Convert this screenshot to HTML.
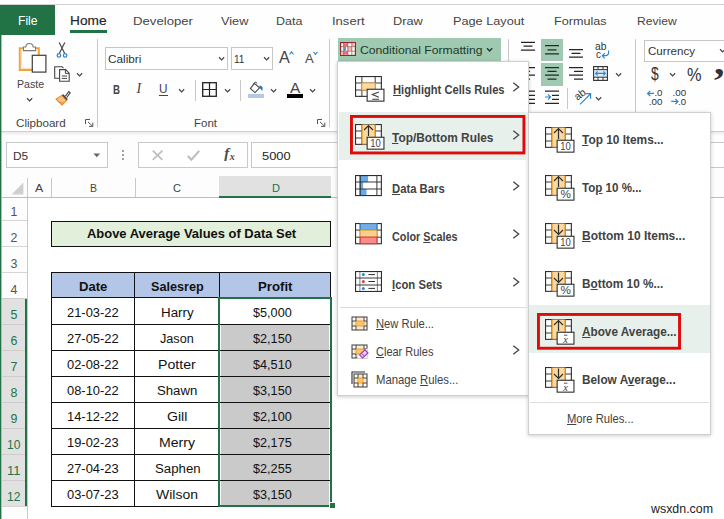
<!DOCTYPE html>
<html lang="en"><head><meta charset="utf-8"><title>Excel - Conditional Formatting - Above Average</title>
<style>
html,body{margin:0;padding:0;}
body{width:724px;height:519px;overflow:hidden;background:#fff;position:relative;font-family:"Liberation Sans",sans-serif;}
#r{position:absolute;left:0;top:0;width:724px;height:519px;overflow:hidden;}
#r div,#r svg,#r span.t{position:absolute;}
#r span.t{white-space:nowrap;transform-origin:0 50%;}
#r svg{overflow:visible;}
u{text-decoration:underline;text-decoration-thickness:1px;text-underline-offset:1px;}
</style></head>
<body><div id="r">
<div style="left:0px;top:0px;width:724px;height:5px;background:#fff;border-bottom:1px solid #d2d2d2;box-sizing:border-box"></div>
<div style="left:0px;top:5px;width:724px;height:126px;background:#fefefe"></div>
<div style="left:0px;top:130.6px;width:724px;height:1.2px;background:#cfcfcf"></div>
<div style="left:0px;top:131.8px;width:724px;height:4.6px;background:linear-gradient(#ebebeb,#fdfdfd)"></div>
<div style="left:0px;top:136.4px;width:724px;height:40px;background:#fdfdfd"></div>
<div style="left:0px;top:176px;width:724px;height:21px;background:#fdfdfd"></div>
<div style="left:0px;top:5px;width:54.5px;height:29.5px;background:#217346"></div>
<span class="t" style="left:18.00px;top:15px;font-size:12px;line-height:12px;color:#fff;transform:scaleX(1.0084);">File</span>
<span class="t" style="left:69.50px;top:15px;font-size:12px;line-height:12px;color:#262626;transform:scaleX(1.1402);-webkit-text-stroke:0.15px #262626;">Home</span>
<div style="left:69.5px;top:30px;width:37.5px;height:2.5px;background:#217346"></div>
<span class="t" style="left:133.00px;top:16px;font-size:11.8px;line-height:11.8px;color:#444;transform:scaleX(1.1155);">Developer</span>
<span class="t" style="left:221.00px;top:16px;font-size:11.8px;line-height:11.8px;color:#444;transform:scaleX(1.0803);">View</span>
<span class="t" style="left:276.40px;top:16px;font-size:11.8px;line-height:11.8px;color:#444;transform:scaleX(1.0591);">Data</span>
<span class="t" style="left:331.80px;top:16px;font-size:11.8px;line-height:11.8px;color:#444;transform:scaleX(1.1046);">Insert</span>
<span class="t" style="left:393.20px;top:16px;font-size:11.8px;line-height:11.8px;color:#444;transform:scaleX(1.0822);">Draw</span>
<span class="t" style="left:453.00px;top:16px;font-size:11.8px;line-height:11.8px;color:#444;transform:scaleX(1.0759);">Page Layout</span>
<span class="t" style="left:554.20px;top:16px;font-size:11.8px;line-height:11.8px;color:#444;transform:scaleX(1.0675);">Formulas</span>
<span class="t" style="left:637.30px;top:16px;font-size:11.8px;line-height:11.8px;color:#444;transform:scaleX(1.0261);">Review</span>
<svg style="left:17px;top:42px;" width="31" height="32" viewBox="0 0 31 32">
<path d="M7 6.2 H2.8 V28 H15" fill="none" stroke="#eea43c" stroke-width="2"/>
<path d="M18 6.2 H21.8 V13" fill="none" stroke="#eea43c" stroke-width="2"/>
<path d="M4.4 7.8 V26.4 H15" fill="none" stroke="#fbe3bd" stroke-width="1.2"/>
<path d="M6.4 8.6 V5 H8.8 C9.2 0.4 15.8 0.4 16.2 5 H18.6 V8.6 Z" fill="#fff" stroke="#7a7a7a" stroke-width="1.1"/>
<rect x="15.3" y="13.3" width="13.6" height="16.8" fill="#fff" stroke="#444" stroke-width="1.25"/>
</svg>
<span class="t" style="left:16.80px;top:79px;font-size:11.4px;line-height:11.4px;color:#444;transform:scaleX(0.9296);">Paste</span>
<svg style="left:25.599999999999998px;top:96.60000000000001px;" width="7.2" height="5.2" viewBox="0 0 7.2 5.2"><path d="M1 1.30 L3.6 3.90 L6.2 1.30" fill="none" stroke="#444" stroke-width="1.2"/></svg>
<svg style="left:56px;top:42px;" width="12" height="16" viewBox="0 0 12 16">
<path d="M3.2 0.4 L8.6 11.2 M8.8 0.4 L3.4 11.2" fill="none" stroke="#444" stroke-width="1.15"/>
<circle cx="2.9" cy="13.4" r="1.75" fill="none" stroke="#2e86d2" stroke-width="1.25"/>
<circle cx="9.1" cy="13.4" r="1.75" fill="none" stroke="#2e86d2" stroke-width="1.25"/>
</svg>
<svg style="left:54px;top:66px;" width="16" height="16" viewBox="0 0 16 16">
<path d="M5.2 12.2 H0.7 V0.7 H8 L9.5 2.2" fill="none" stroke="#444" stroke-width="1.1"/>
<path d="M5.6 3.6 H11.6 L15.2 7.2 V15.3 H5.6 Z" fill="#fff" stroke="#444" stroke-width="1.1"/>
<path d="M11.4 3.8 V7.4 H15" fill="none" stroke="#444" stroke-width="1"/>
<path d="M7.8 10 H13 M7.8 12.4 H13" stroke="#444" stroke-width="1"/>
</svg>
<svg style="left:76.0px;top:71.9px;" width="7.2" height="5.2" viewBox="0 0 7.2 5.2"><path d="M1 1.30 L3.6 3.90 L6.2 1.30" fill="none" stroke="#444" stroke-width="1.2"/></svg>
<svg style="left:54.5px;top:89.5px;" width="16" height="16" viewBox="0 0 16 16">
<path d="M1 9.2 L6.8 5.4 L11.6 10.6 L7 15 Z" fill="#f6c48a" stroke="#e38b2c" stroke-width="1.1"/>
<path d="M3.4 11.8 L8.8 13.2" stroke="#e38b2c" stroke-width="1"/>
<path d="M7.6 4.6 L12.2 9.8" stroke="#444" stroke-width="1.6"/>
<path d="M10.2 6.4 L13.8 1.6 L15.2 2.8 L11.6 7.8" fill="#fff" stroke="#444" stroke-width="1.1"/>
</svg>
<span class="t" style="left:15.80px;top:118px;font-size:11.2px;line-height:11.2px;color:#444;transform:scaleX(1.0367);">Clipboard</span>
<svg style="left:84.6px;top:119px;" width="9" height="8" viewBox="0 0 9 8"><path d="M0.5 5 V0.5 H5" fill="none" stroke="#555" stroke-width="1"/><path d="M3 3 L7.6 7.2 M7.8 3.6 V7.4 H4" fill="none" stroke="#555" stroke-width="1"/></svg>
<div style="left:97px;top:39px;width:1px;height:88px;background:#c8c8c8"></div>
<div style="left:105px;top:47px;width:122.5px;height:22.5px;background:#fff;border:1px solid #c6c6c6;box-sizing:border-box"></div>
<div style="left:230.5px;top:47px;width:42px;height:22.5px;background:#fff;border:1px solid #c6c6c6;box-sizing:border-box"></div>
<span class="t" style="left:108.20px;top:54px;font-size:11px;line-height:11px;color:#333;transform:scaleX(1.0714);">Calibri</span>
<svg style="left:217.8px;top:56.4px;" width="7.2" height="5.2" viewBox="0 0 7.2 5.2"><path d="M1 1.30 L3.6 3.90 L6.2 1.30" fill="none" stroke="#444" stroke-width="1.2"/></svg>
<span class="t" style="left:233.70px;top:54px;font-size:11px;line-height:11px;color:#333;transform:scaleX(0.9195);">11</span>
<svg style="left:262.79999999999995px;top:56.4px;" width="7.2" height="5.2" viewBox="0 0 7.2 5.2"><path d="M1 1.30 L3.6 3.90 L6.2 1.30" fill="none" stroke="#444" stroke-width="1.2"/></svg>
<span class="t" style="left:279.00px;top:49px;font-size:16.4px;line-height:16.4px;color:#444;transform:scaleX(0.9873);">A</span>
<svg style="left:289.2px;top:51px;" width="5" height="4" viewBox="0 0 5 4"><path d="M0.5 3.4 L2.5 0.9 L4.5 3.4" fill="none" stroke="#2e86d2" stroke-width="1.1"/></svg>
<span class="t" style="left:304.60px;top:53px;font-size:12.4px;line-height:12.4px;color:#444;transform:scaleX(1.0518);">A</span>
<svg style="left:313.2px;top:51px;" width="5" height="4" viewBox="0 0 5 4"><path d="M0.5 0.8 L2.5 3.3 L4.5 0.8" fill="none" stroke="#2e86d2" stroke-width="1.1"/></svg>
<span class="t" style="left:112.90px;top:83px;font-size:13px;line-height:13px;color:#444;font-weight:bold;transform:scaleX(0.7456);">B</span>
<span class="t" style="left:136.6px;top:81.6px;font-size:14px;line-height:14px;color:#444;font-family:'Liberation Serif',serif;font-style:italic;">I</span>
<span class="t" style="left:159.20px;top:83px;font-size:12.6px;line-height:12.6px;color:#444;transform:scaleX(0.9341);">U</span>
<div style="left:159.2px;top:95px;width:8.6px;height:1px;background:#444"></div>
<svg style="left:177.70000000000002px;top:87.60000000000001px;" width="7.2" height="5.2" viewBox="0 0 7.2 5.2"><path d="M1 1.30 L3.6 3.90 L6.2 1.30" fill="none" stroke="#444" stroke-width="1.2"/></svg>
<div style="left:194.5px;top:80px;width:1px;height:21px;background:#c8c8c8"></div>
<svg style="left:202px;top:82px;" width="15" height="15" viewBox="0 0 15 15"><rect x="0.7" y="0.7" width="13.6" height="13.6" fill="none" stroke="#222" stroke-width="1.3"/><path d="M7.5 0.7 V14.3 M0.7 7.5 H14.3" stroke="#222" stroke-width="1.2"/></svg>
<svg style="left:223.9px;top:87.7px;" width="7.2" height="5.2" viewBox="0 0 7.2 5.2"><path d="M1 1.30 L3.6 3.90 L6.2 1.30" fill="none" stroke="#444" stroke-width="1.2"/></svg>
<div style="left:240.3px;top:80px;width:1px;height:21px;background:#c8c8c8"></div>
<svg style="left:248px;top:81px;" width="16" height="13" viewBox="0 0 16 13">
<path d="M6.4 2.4 L11.6 6.8 L7 11.6 L2.4 7.4 Z" fill="#fff" stroke="#444" stroke-width="1.1"/>
<path d="M5.2 3.6 L7.4 0.9 L9.2 2.4" fill="none" stroke="#444" stroke-width="1"/>
<path d="M11.6 5.4 C13.6 4.2 14.6 6 14.2 9.4 C13.2 8.6 12.4 7.6 11.8 6.8 Z" fill="#2e74b5" stroke="#2e74b5" stroke-width="0.6"/>
</svg>
<div style="left:248px;top:94.2px;width:15.8px;height:3.6px;background:#b4c7e7"></div>
<svg style="left:270.0px;top:87.7px;" width="7.2" height="5.2" viewBox="0 0 7.2 5.2"><path d="M1 1.30 L3.6 3.90 L6.2 1.30" fill="none" stroke="#444" stroke-width="1.2"/></svg>
<span class="t" style="left:290.10px;top:81px;font-size:14.2px;line-height:14.2px;color:#444;transform:scaleX(1.0874);">A</span>
<div style="left:286.9px;top:94.2px;width:16.3px;height:3.6px;background:#000"></div>
<svg style="left:308.9px;top:87.7px;" width="7.2" height="5.2" viewBox="0 0 7.2 5.2"><path d="M1 1.30 L3.6 3.90 L6.2 1.30" fill="none" stroke="#444" stroke-width="1.2"/></svg>
<span class="t" style="left:194.00px;top:118px;font-size:11.2px;line-height:11.2px;color:#444;transform:scaleX(1.0263);">Font</span>
<svg style="left:317px;top:119px;" width="9" height="8" viewBox="0 0 9 8"><path d="M0.5 5 V0.5 H5" fill="none" stroke="#555" stroke-width="1"/><path d="M3 3 L7.6 7.2 M7.8 3.6 V7.4 H4" fill="none" stroke="#555" stroke-width="1"/></svg>
<div style="left:328.7px;top:39px;width:1px;height:88px;background:#c8c8c8"></div>
<div style="left:337.5px;top:38px;width:163.4px;height:23.4px;background:#9fc9b1"></div>
<svg style="left:340.2px;top:42px;" width="16" height="14" viewBox="0 0 16 14">
<rect x="0.6" y="0.6" width="14.8" height="12.8" fill="#fff" stroke="#8a2b2b" stroke-width="1.2"/>
<rect x="3.6" y="1.2" width="4.2" height="3" fill="#f26d6d"/><rect x="3.6" y="9.6" width="4.2" height="3" fill="#f26d6d"/>
<rect x="7.8" y="5" width="4" height="3.8" fill="#f9b3b3"/><rect x="3.9" y="5" width="2" height="3.8" fill="#4f9ad9"/>
<rect x="11.8" y="1.2" width="3" height="3" fill="#f9b3b3"/><rect x="0.9" y="9.6" width="2.6" height="3" fill="#f9b3b3"/>
<path d="M3.6 0.6 V13.4 M7.8 0.6 V13.4 M11.8 0.6 V13.4 M0.6 4.6 H15.4 M0.6 9.2 H15.4" stroke="#8a2b2b" stroke-width="0.7" opacity="0.8"/>
</svg>
<span class="t" style="left:359.80px;top:45px;font-size:11.8px;line-height:11.8px;color:#1e3a2b;transform:scaleX(1.0319);">Conditional Formatting</span>
<svg style="left:485.79999999999995px;top:46.699999999999996px;" width="7.2" height="5.2" viewBox="0 0 7.2 5.2"><path d="M1 1.30 L3.6 3.90 L6.2 1.30" fill="none" stroke="#1e3a2b" stroke-width="1.4"/></svg>
<div style="left:507.8px;top:39px;width:1px;height:88px;background:#c8c8c8"></div>
<svg style="left:521px;top:40px;" width="16" height="16" viewBox="0 0 16 16"><path d="M0 2.3 H14 M2.5 6.2 H11.5 M0 10.1 H14" stroke="#262626" stroke-width="1.25" fill="none"/></svg>
<div style="left:541.2px;top:39.3px;width:21.8px;height:22.2px;background:#9fc9b1"></div>
<svg style="left:545px;top:40px;" width="16" height="16" viewBox="0 0 16 16"><path d="M0 5.6 H14 M2.5 9.9 H11.5 M0 13.8 H14" stroke="#262626" stroke-width="1.25" fill="none"/></svg>
<svg style="left:569px;top:40px;" width="16" height="16" viewBox="0 0 16 16"><path d="M0 9.5 H14 M2.5 13.4 H11.5 M0 17.2 H14" stroke="#262626" stroke-width="1.25" fill="none"/></svg>
<span class="t" style="left:595.30px;top:41px;font-size:10.5px;line-height:10.5px;color:#333;transform:scaleX(0.9761);">ab</span>
<span class="t" style="left:595.50px;top:49px;font-size:10.5px;line-height:10.5px;color:#333;transform:scaleX(0.9524);">c</span>
<svg style="left:600.5px;top:49.5px;" width="9" height="9" viewBox="0 0 9 9"><path d="M7.6 0.6 V3 C7.6 5.6 5.4 5.8 1.4 5.8 M3.8 3.2 L1.2 5.8 L3.8 8.4" fill="none" stroke="#2e86d2" stroke-width="1.15"/></svg>
<svg style="left:521px;top:63px;" width="16" height="16" viewBox="0 0 16 16"><path d="M0 4.5 H14 M0 8.4 H9 M0 12.2 H14 M0 16.1 H9" stroke="#262626" stroke-width="1.25" fill="none"/></svg>
<div style="left:541.2px;top:63.2px;width:21.8px;height:22.4px;background:#9fc9b1"></div>
<svg style="left:545px;top:63px;" width="16" height="16" viewBox="0 0 16 16"><path d="M0 4.5 H14 M2.5 8.4 H11.5 M0 12.2 H14 M2.5 16.1 H11.5" stroke="#262626" stroke-width="1.25" fill="none"/></svg>
<svg style="left:569px;top:63px;" width="16" height="16" viewBox="0 0 16 16"><path d="M0 4.5 H14 M5 8.4 H14 M0 12.2 H14 M5 16.1 H14" stroke="#262626" stroke-width="1.25" fill="none"/></svg>
<svg style="left:593.2px;top:66px;" width="15" height="15" viewBox="0 0 15 15">
<rect x="0.6" y="0.6" width="13.8" height="13.8" fill="#fff" stroke="#333" stroke-width="1.15"/>
<rect x="0.6" y="3.6" width="13.8" height="7.6" fill="#ddebf7" stroke="#333" stroke-width="1"/>
<path d="M5 0.6 V3.6 M10 0.6 V3.6 M5 11.2 V14.4 M10 11.2 V14.4" stroke="#333" stroke-width="1"/>
<path d="M2.6 7.4 H12.4 M4.6 5.4 L2.6 7.4 L4.6 9.4 M10.4 5.4 L12.4 7.4 L10.4 9.4" fill="none" stroke="#2e86d2" stroke-width="1.1"/>
</svg>
<svg style="left:614.9px;top:71.7px;" width="7.2" height="5.2" viewBox="0 0 7.2 5.2"><path d="M1 1.30 L3.6 3.90 L6.2 1.30" fill="none" stroke="#444" stroke-width="1.2"/></svg>
<svg style="left:521px;top:87px;" width="16" height="16" viewBox="0 0 16 16"><path d="M0 4 H14 M6 8.3 H14 M6 12.4 H14 M0 16.3 H14" stroke="#262626" stroke-width="1.25" fill="none"/></svg>
<svg style="left:545px;top:87px;" width="16" height="16" viewBox="0 0 16 16"><path d="M0 4 H14 M7 8.3 H14 M7 12.4 H14 M0 16.3 H14" stroke="#262626" stroke-width="1.25" fill="none"/></svg>
<svg style="left:545px;top:93px;" width="7" height="8" viewBox="0 0 7 8"><path d="M0 4 H5.4 M3 1.4 L5.6 4 L3 6.6" fill="none" stroke="#2e86d2" stroke-width="1.15"/></svg>
<div style="left:567.3px;top:88px;width:1px;height:20.5px;background:#c8c8c8"></div>
<span class="t" style="left:574px;top:88.5px;font-size:10.5px;line-height:11px;color:#333;transform:rotate(-38deg);transform-origin:50% 50%;">ab</span>
<svg style="left:577px;top:92px;" width="16" height="14" viewBox="0 0 16 14"><path d="M3 12.4 L13.4 2 M8.4 1.6 H13.6 V6.8" fill="none" stroke="#2e86d2" stroke-width="1.15"/></svg>
<svg style="left:595.0px;top:95.60000000000001px;" width="7.2" height="5.2" viewBox="0 0 7.2 5.2"><path d="M1 1.30 L3.6 3.90 L6.2 1.30" fill="none" stroke="#444" stroke-width="1.2"/></svg>
<div style="left:635.4px;top:39px;width:1px;height:88px;background:#c8c8c8"></div>
<div style="left:644.2px;top:39.6px;width:90px;height:22px;background:#fff;border:1px solid #c6c6c6;box-sizing:border-box"></div>
<span class="t" style="left:647.70px;top:46px;font-size:11.8px;line-height:11.8px;color:#333;transform:scaleX(0.9818);">Currency</span>
<svg style="left:718.9px;top:48.0px;" width="7.2" height="5.2" viewBox="0 0 7.2 5.2"><path d="M1 1.30 L3.6 3.90 L6.2 1.30" fill="none" stroke="#444" stroke-width="1.2"/></svg>
<span class="t" style="left:650.80px;top:65px;font-size:18.5px;line-height:18.5px;color:#333;transform:scaleX(0.7484);">$</span>
<svg style="left:669.0px;top:71.7px;" width="7.2" height="5.2" viewBox="0 0 7.2 5.2"><path d="M1 1.30 L3.6 3.90 L6.2 1.30" fill="none" stroke="#444" stroke-width="1.2"/></svg>
<span class="t" style="left:686.70px;top:66px;font-size:18px;line-height:18px;color:#333;transform:scaleX(0.9060);">%</span>
<span class="t" style="left:713.6px;top:44.6px;font-size:35px;line-height:35px;color:#333;font-weight:bold;transform:scaleX(1.2);font-family:'Liberation Serif',serif;">,</span>
<svg style="left:647px;top:90.3px;" width="16" height="15" viewBox="0 0 16 15"><text x="7.4" y="6.4" font-size="8.6" textLength="8" lengthAdjust="spacingAndGlyphs" fill="#333" font-family="Liberation Sans, sans-serif">.0</text><text x="1.8" y="14.5" font-size="8.6" textLength="13.6" lengthAdjust="spacingAndGlyphs" fill="#333" font-family="Liberation Sans, sans-serif">.00</text><path d="M0.6 3.4 H7 M3.2 0.8 L0.6 3.4 L3.2 6" fill="none" stroke="#2e86d2" stroke-width="1.2"/></svg>
<svg style="left:671.2px;top:90.3px;" width="16" height="15" viewBox="0 0 16 15"><text x="1.6" y="6.4" font-size="8.6" textLength="13.6" lengthAdjust="spacingAndGlyphs" fill="#333" font-family="Liberation Sans, sans-serif">.00</text><text x="7.2" y="14.5" font-size="8.6" textLength="8" lengthAdjust="spacingAndGlyphs" fill="#333" font-family="Liberation Sans, sans-serif">.0</text><path d="M0.2 11.4 H7 M4.4 8.8 L7 11.4 L4.4 14" fill="none" stroke="#2e86d2" stroke-width="1.2"/></svg>
<div style="left:6.3px;top:142.3px;width:101.5px;height:25.5px;background:#fff;border:1px solid #c8c8c8;box-sizing:border-box"></div>
<span class="t" style="left:13.40px;top:151px;font-size:11.8px;line-height:11.8px;color:#333;transform:scaleX(1.0076);">D5</span>
<svg style="left:93px;top:152.5px;" width="8" height="5" viewBox="0 0 8 5"><path d="M0.4 0.4 H7.2 L3.8 4.2 Z" fill="#666"/></svg>
<div style="left:122px;top:149.7px;width:1.9px;height:1.9px;background:#a0a0a0"></div>
<div style="left:122px;top:153.8px;width:1.9px;height:1.9px;background:#a0a0a0"></div>
<div style="left:122px;top:157.8px;width:1.9px;height:1.9px;background:#a0a0a0"></div>
<div style="left:138px;top:142.3px;width:109.5px;height:25.5px;background:#fff;border:1px solid #c8c8c8;box-sizing:border-box"></div>
<svg style="left:151.6px;top:150px;" width="11" height="10.4" viewBox="0 0 11 10.4"><path d="M0.8 0.6 L10.4 9.8 M10.4 0.6 L0.8 9.8" stroke="#bdbdbd" stroke-width="1.7" fill="none"/></svg>
<svg style="left:187px;top:150px;" width="13" height="11" viewBox="0 0 13 11"><path d="M0.8 6 L4.4 9.8 L12.2 0.9" stroke="#bdbdbd" stroke-width="2.1" fill="none"/></svg>
<span class="t" style="left:224.3px;top:146.2px;font-size:15px;line-height:15px;color:#4a4a4a;font-weight:bold;font-family:'Liberation Serif',serif;font-style:italic;">f</span>
<span class="t" style="left:229.8px;top:151.6px;font-size:10px;line-height:10px;color:#4a4a4a;font-weight:bold;font-family:'Liberation Serif',serif;font-style:italic;">x</span>
<div style="left:251.3px;top:142.3px;width:480px;height:25.5px;background:#fff;border:1px solid #c8c8c8;box-sizing:border-box"></div>
<span class="t" style="left:262.40px;top:151px;font-size:11.8px;line-height:11.8px;color:#222;transform:scaleX(1.0895);">5000</span>
<div style="left:0px;top:176px;width:724px;height:21.3px;background:#fdfdfd"></div>
<div style="left:2px;top:197px;width:722px;height:1px;background:#bdbdbd"></div>
<svg style="left:10.5px;top:181.5px;" width="13" height="13" viewBox="0 0 13 13"><path d="M12.4 0.6 V12.4 H0.6 Z" fill="#cfcfcf"/></svg>
<div style="left:26.5px;top:178px;width:1px;height:19px;background:#c9c9c9"></div>
<div style="left:51.3px;top:178px;width:1px;height:19px;background:#c9c9c9"></div>
<div style="left:134.5px;top:178px;width:1px;height:19px;background:#c9c9c9"></div>
<div style="left:219.3px;top:176px;width:112.2px;height:20.2px;background:#e1e1e1"></div>
<div style="left:219.3px;top:196px;width:112.2px;height:2px;background:#217346"></div>
<span class="t" style="left:35.00px;top:183px;font-size:11.4px;line-height:11.4px;color:#444;transform:scaleX(1.0784);">A</span>
<span class="t" style="left:89.50px;top:183px;font-size:11.4px;line-height:11.4px;color:#444;transform:scaleX(0.9205);">B</span>
<span class="t" style="left:172.80px;top:183px;font-size:11.4px;line-height:11.4px;color:#444;transform:scaleX(0.9717);">C</span>
<span class="t" style="left:271.50px;top:183px;font-size:11.4px;line-height:11.4px;color:#217346;transform:scaleX(0.9717);">D</span>
<div style="left:2px;top:198px;width:24.5px;height:321px;background:#fdfdfd"></div>
<div style="left:26.5px;top:198px;width:1px;height:321px;background:#c9c9c9"></div>
<div style="left:2px;top:298.3px;width:24.5px;height:208px;background:#e1e1e1"></div>
<div style="left:25px;top:298.3px;width:2.2px;height:208px;background:#217346"></div>
<div style="left:2px;top:220.0px;width:24.5px;height:1px;background:#d6d6d6"></div>
<span class="t" style="left:10.45px;top:206px;font-size:12.4px;line-height:12.4px;color:#555;">1</span>
<div style="left:2px;top:246.0px;width:24.5px;height:1px;background:#d6d6d6"></div>
<span class="t" style="left:10.45px;top:232px;font-size:12.4px;line-height:12.4px;color:#555;">2</span>
<div style="left:2px;top:272.0px;width:24.5px;height:1px;background:#d6d6d6"></div>
<span class="t" style="left:10.45px;top:258px;font-size:12.4px;line-height:12.4px;color:#555;">3</span>
<div style="left:2px;top:298.0px;width:24.5px;height:1px;background:#cdcdcd"></div>
<span class="t" style="left:10.45px;top:284px;font-size:12.4px;line-height:12.4px;color:#555;">4</span>
<div style="left:2px;top:324.0px;width:23px;height:1px;background:#cdcdcd"></div>
<span class="t" style="left:10.45px;top:309px;font-size:12.4px;line-height:12.4px;color:#217346;">5</span>
<div style="left:2px;top:350.0px;width:23px;height:1px;background:#cdcdcd"></div>
<span class="t" style="left:10.45px;top:335px;font-size:12.4px;line-height:12.4px;color:#217346;">6</span>
<div style="left:2px;top:376.0px;width:23px;height:1px;background:#cdcdcd"></div>
<span class="t" style="left:10.45px;top:361px;font-size:12.4px;line-height:12.4px;color:#217346;">7</span>
<div style="left:2px;top:402.0px;width:23px;height:1px;background:#cdcdcd"></div>
<span class="t" style="left:10.45px;top:387px;font-size:12.4px;line-height:12.4px;color:#217346;">8</span>
<div style="left:2px;top:428.0px;width:23px;height:1px;background:#cdcdcd"></div>
<span class="t" style="left:10.45px;top:413px;font-size:12.4px;line-height:12.4px;color:#217346;">9</span>
<div style="left:2px;top:454.0px;width:23px;height:1px;background:#cdcdcd"></div>
<span class="t" style="left:7.20px;top:439px;font-size:12.4px;line-height:12.4px;color:#217346;transform:scaleX(0.9715);">10</span>
<div style="left:2px;top:480.0px;width:23px;height:1px;background:#cdcdcd"></div>
<span class="t" style="left:7.20px;top:465px;font-size:12.4px;line-height:12.4px;color:#217346;transform:scaleX(1.0410);">11</span>
<div style="left:2px;top:506.0px;width:24.5px;height:1px;background:#d6d6d6"></div>
<span class="t" style="left:7.20px;top:491px;font-size:12.4px;line-height:12.4px;color:#217346;transform:scaleX(0.9715);">12</span>
<div style="left:51.3px;top:220.5px;width:280.0px;height:26.3px;background:#e2efda;border:1px solid #111;box-sizing:border-box"></div>
<span class="t" style="left:86.90px;top:228px;font-size:12.6px;line-height:12.6px;color:#111;font-weight:bold;transform:scaleX(1.0282);">Above Average Values of Data Set</span>
<div style="left:51.3px;top:272.2px;width:280.0px;height:26.3px;background:#b4c6e7;border:1px solid #111;box-sizing:border-box"></div>
<div style="left:221.20000000000002px;top:324.8px;width:108.20000000000002px;height:180px;background:#cacaca"></div>
<div style="left:51.3px;top:298px;width:280.0px;height:208.8px;border:1px solid #111;border-top:none;box-sizing:border-box"></div>
<div style="left:133.9px;top:272.2px;width:1.1px;height:234.4px;background:#111"></div>
<div style="left:218.8px;top:272.2px;width:1.1px;height:234.4px;background:#111"></div>
<div style="left:51.3px;top:324.0px;width:279.3px;height:1.1px;background:#111"></div>
<div style="left:51.3px;top:350.0px;width:279.3px;height:1.1px;background:#111"></div>
<div style="left:51.3px;top:376.0px;width:279.3px;height:1.1px;background:#111"></div>
<div style="left:51.3px;top:402.0px;width:279.3px;height:1.1px;background:#111"></div>
<div style="left:51.3px;top:428.0px;width:279.3px;height:1.1px;background:#111"></div>
<div style="left:51.3px;top:454.0px;width:279.3px;height:1.1px;background:#111"></div>
<div style="left:51.3px;top:480.0px;width:279.3px;height:1.1px;background:#111"></div>
<div style="left:218.4px;top:297.2px;width:113.70000000000002px;height:209.4px;border:2px solid #217346;box-sizing:border-box"></div>
<div style="left:328.6px;top:502.4px;width:5px;height:5px;background:#217346;border:1px solid #fff;box-sizing:content-box"></div>
<span class="t" style="left:78.90px;top:280px;font-size:13px;line-height:13px;color:#111;font-weight:bold;transform:scaleX(1.0079);">Date</span>
<span class="t" style="left:150.70px;top:280px;font-size:13px;line-height:13px;color:#111;font-weight:bold;transform:scaleX(0.9741);">Salesrep</span>
<span class="t" style="left:258.45px;top:280px;font-size:13px;line-height:13px;color:#111;font-weight:bold;transform:scaleX(1.0164);">Profit</span>
<span class="t" style="left:67.30px;top:307px;font-size:12.5px;line-height:12.5px;color:#111;transform:scaleX(1.0312);">21-03-22</span>
<span class="t" style="left:161.00px;top:307px;font-size:12.5px;line-height:12.5px;color:#111;transform:scaleX(1.0669);">Harry</span>
<span class="t" style="left:253.25px;top:307px;font-size:12.5px;line-height:12.5px;color:#111;transform:scaleX(1.0122);">$5,000</span>
<span class="t" style="left:67.30px;top:333px;font-size:12.5px;line-height:12.5px;color:#111;transform:scaleX(1.0312);">27-05-22</span>
<span class="t" style="left:160.45px;top:333px;font-size:12.5px;line-height:12.5px;color:#111;transform:scaleX(1.0103);">Jason</span>
<span class="t" style="left:253.25px;top:333px;font-size:12.5px;line-height:12.5px;color:#111;transform:scaleX(1.0122);">$2,150</span>
<span class="t" style="left:67.30px;top:359px;font-size:12.5px;line-height:12.5px;color:#111;transform:scaleX(1.0312);">02-08-22</span>
<span class="t" style="left:158.40px;top:359px;font-size:12.5px;line-height:12.5px;color:#111;transform:scaleX(1.1334);">Potter</span>
<span class="t" style="left:253.25px;top:359px;font-size:12.5px;line-height:12.5px;color:#111;transform:scaleX(1.0122);">$4,510</span>
<span class="t" style="left:67.30px;top:385px;font-size:12.5px;line-height:12.5px;color:#111;transform:scaleX(1.0312);">08-10-22</span>
<span class="t" style="left:157.15px;top:385px;font-size:12.5px;line-height:12.5px;color:#111;transform:scaleX(1.0544);">Shawn</span>
<span class="t" style="left:253.25px;top:385px;font-size:12.5px;line-height:12.5px;color:#111;transform:scaleX(1.0122);">$3,150</span>
<span class="t" style="left:67.30px;top:411px;font-size:12.5px;line-height:12.5px;color:#111;transform:scaleX(1.0312);">14-12-22</span>
<span class="t" style="left:167.10px;top:411px;font-size:12.5px;line-height:12.5px;color:#111;transform:scaleX(1.1299);">Gill</span>
<span class="t" style="left:253.25px;top:411px;font-size:12.5px;line-height:12.5px;color:#111;transform:scaleX(1.0122);">$2,100</span>
<span class="t" style="left:67.30px;top:437px;font-size:12.5px;line-height:12.5px;color:#111;transform:scaleX(1.0312);">19-02-23</span>
<span class="t" style="left:159.30px;top:437px;font-size:12.5px;line-height:12.5px;color:#111;transform:scaleX(1.1271);">Merry</span>
<span class="t" style="left:253.25px;top:437px;font-size:12.5px;line-height:12.5px;color:#111;transform:scaleX(1.0122);">$2,175</span>
<span class="t" style="left:67.30px;top:463px;font-size:12.5px;line-height:12.5px;color:#111;transform:scaleX(1.0312);">27-04-23</span>
<span class="t" style="left:154.50px;top:463px;font-size:12.5px;line-height:12.5px;color:#111;transform:scaleX(1.0580);">Saphen</span>
<span class="t" style="left:253.25px;top:463px;font-size:12.5px;line-height:12.5px;color:#111;transform:scaleX(1.0122);">$2,255</span>
<span class="t" style="left:67.30px;top:489px;font-size:12.5px;line-height:12.5px;color:#111;transform:scaleX(1.0312);">03-07-23</span>
<span class="t" style="left:156.30px;top:489px;font-size:12.5px;line-height:12.5px;color:#111;transform:scaleX(1.1198);">Wilson</span>
<span class="t" style="left:253.25px;top:489px;font-size:12.5px;line-height:12.5px;color:#111;transform:scaleX(1.0122);">$3,150</span>
<div style="left:337.4px;top:61px;width:191.6px;height:334.6px;background:#fff;border:1px solid #cfcfcf;box-sizing:border-box;box-shadow:0 1px 4px rgba(0,0,0,0.2);"></div>
<div style="left:528px;top:111.6px;width:182.6px;height:323.4px;background:#fff;border:1px solid #cfcfcf;box-sizing:border-box;box-shadow:0 1px 4px rgba(0,0,0,0.2);"></div>
<div style="left:339px;top:111.6px;width:189px;height:48px;background:#e7f0ea"></div>
<div style="left:529px;top:305.4px;width:180.6px;height:47.6px;background:#e7f0ea"></div>
<svg style="left:349.9px;top:115.1px;" width="175.4" height="39.4" viewBox="0 0 175.4 39.4"><rect x="1.45" y="1.45" width="172.5" height="36.5" fill="none" stroke="#df0a0a" stroke-width="2.9"/></svg>
<svg style="left:537.2px;top:313.2px;" width="144" height="36.7" viewBox="0 0 144 36.7"><rect x="1.45" y="1.45" width="141.1" height="33.8" fill="none" stroke="#df0a0a" stroke-width="2.9"/></svg>
<div style="left:340px;top:306.8px;width:186.5px;height:1px;background:#dcdcdc"></div>
<div style="left:530px;top:402.4px;width:178.6px;height:1px;background:#dcdcdc"></div>
<svg style="left:355.4px;top:76.3px;" width="30" height="27" viewBox="0 0 30 27"><rect x="0.55" y="0.55" width="25.799999999999997" height="19.799999999999997" fill="#fff"/><path d="M6.9 0.5 V20.4 M20.2 0.5 V20.4 M0.5 7 H26.4 M0.5 14 H26.4 " stroke="#2e2e2e" stroke-width="0.95" fill="none"/><rect x="0.55" y="0.55" width="25.80" height="19.80" fill="none" stroke="#2e2e2e" stroke-width="1.1"/><rect x="6.9" y="7" width="13.3" height="7" fill="#fcd9a0" stroke="#eda73f" stroke-width="1"/><rect x="12.15" y="13.25" width="16.8" height="11.9" fill="#fff" stroke="#2e2e2e" stroke-width="1.1"/><path d="M23.8 16 L17.4 18.6 L23.8 21.2 M17.2 23.2 H24" fill="none" stroke="#3a3a3a" stroke-width="1.1"/></svg>
<span class="t" style="left:392.50px;top:84px;font-size:12.6px;line-height:12.6px;color:#424242;font-weight:bold;transform:scaleX(0.8856);"><u>H</u>ighlight Cells Rules</span>
<svg style="left:512.3px;top:80.6px;" width="8" height="12" viewBox="0 0 8 12"><path d="M1.3 1.7 L6.7 6 L1.3 10.3" fill="none" stroke="#444" stroke-width="1.3"/></svg>
<svg style="left:355.4px;top:124.4px;" width="30" height="27" viewBox="0 0 30 27"><rect x="0.55" y="0.55" width="25.799999999999997" height="19.799999999999997" fill="#fff"/><path d="M6.9 0.5 V20.4 M20.2 0.5 V20.4 M0.5 7 H26.4 M0.5 14 H26.4 " stroke="#2e2e2e" stroke-width="0.95" fill="none"/><rect x="0.55" y="0.55" width="25.80" height="19.80" fill="none" stroke="#2e2e2e" stroke-width="1.1"/><rect x="6.9" y="0" width="13.3" height="20.9" fill="#fcd9a0"/><path d="M7.3 0 V20.9 M19.8 0 V20.9" stroke="#eda73f" stroke-width="1.1"/><path d="M6.4 0.55 H20.7 M6.4 20.35 H20.7" stroke="#2e2e2e" stroke-width="1.1" opacity="0.55"/><path d="M13.5 12 V1.6 M9 6 L13.5 1.5 L18 6" fill="none" stroke="#2e2e2e" stroke-width="1.2"/><rect x="12.15" y="13.25" width="16.8" height="11.9" fill="#fff" stroke="#2e2e2e" stroke-width="1.1"/><text x="20.6" y="23.1" font-size="10.6" text-anchor="middle" textLength="10.6" lengthAdjust="spacingAndGlyphs" fill="#444" font-family="Liberation Sans, sans-serif">10</text></svg>
<span class="t" style="left:392.30px;top:132px;font-size:12.6px;line-height:12.6px;color:#424242;font-weight:bold;transform:scaleX(0.9437);"><u>T</u>op/Bottom Rules</span>
<svg style="left:512.3px;top:129px;" width="8" height="12" viewBox="0 0 8 12"><path d="M1.3 1.7 L6.7 6 L1.3 10.3" fill="none" stroke="#444" stroke-width="1.3"/></svg>
<svg style="left:355.4px;top:175.3px;" width="28" height="22" viewBox="0 0 28 22"><rect x="0.55" y="0.55" width="25.799999999999997" height="20.0" fill="#fff"/><rect x="5.1" y="0.5" width="8" height="6.5" fill="#6aa9e4"/><rect x="5.1" y="7" width="3" height="7" fill="#6aa9e4"/><rect x="5.1" y="14" width="6.4" height="6.6" fill="#6aa9e4"/><path d="M5.1 0 V21" stroke="#2f79c4" stroke-width="1.2"/><path d="M5.2 0.5 V20.6 M21.9 0.5 V20.6 M0.5 7 H26.4 M0.5 14 H26.4 " stroke="#2e2e2e" stroke-width="0.95" fill="none"/><rect x="0.55" y="0.55" width="25.80" height="20.00" fill="none" stroke="#2e2e2e" stroke-width="1.1"/></svg>
<span class="t" style="left:392.30px;top:183px;font-size:12.6px;line-height:12.6px;color:#424242;font-weight:bold;transform:scaleX(0.8958);"><u>D</u>ata Bars</span>
<svg style="left:512.3px;top:179.7px;" width="8" height="12" viewBox="0 0 8 12"><path d="M1.3 1.7 L6.7 6 L1.3 10.3" fill="none" stroke="#444" stroke-width="1.3"/></svg>
<svg style="left:355.4px;top:223.3px;" width="28" height="22" viewBox="0 0 28 22"><rect x="0.55" y="0.55" width="25.799999999999997" height="20.2" fill="#fff"/><path d="M5.2 0.5 V20.8 M21.9 0.5 V20.8 M0.5 7.1 H26.4 M0.5 14.2 H26.4 " stroke="#2e2e2e" stroke-width="0.95" fill="none"/><rect x="0.55" y="0.55" width="25.80" height="20.20" fill="none" stroke="#2e2e2e" stroke-width="1.1"/><rect x="5.2" y="0.6" width="16.7" height="6.6" fill="#74ade6" stroke="#2f79c4" stroke-width="1"/><rect x="5.2" y="7.2" width="16.7" height="6.9" fill="#fbd28c" stroke="#e5a23f" stroke-width="0.8"/><rect x="5.2" y="14.1" width="16.7" height="6.6" fill="#fb8d8d" stroke="#d93636" stroke-width="1"/></svg>
<span class="t" style="left:392.30px;top:231px;font-size:12.6px;line-height:12.6px;color:#424242;font-weight:bold;transform:scaleX(0.8594);">Color <u>S</u>cales</span>
<svg style="left:512.3px;top:227.6px;" width="8" height="12" viewBox="0 0 8 12"><path d="M1.3 1.7 L6.7 6 L1.3 10.3" fill="none" stroke="#444" stroke-width="1.3"/></svg>
<svg style="left:355.4px;top:271.2px;" width="28" height="22" viewBox="0 0 28 22"><rect x="0.55" y="0.55" width="25.9" height="19.9" fill="#fff" stroke="#2e2e2e" stroke-width="1.1"/><path d="M0.5 7 H26.5 M0.5 14 H26.5" stroke="#2e2e2e" stroke-width="0.95"/><path d="M4.9 0.5 V20.5 M22.4 0.5 V20.5" stroke="#2e2e2e" stroke-width="0.8" opacity="0.75"/><circle cx="8.3" cy="3.6" r="1.5" fill="#2f86d2"/><path d="M13.4 3.6 H20" stroke="#2e2e2e" stroke-width="1"/><circle cx="8.3" cy="10.5" r="1.5" fill="#d9453a"/><path d="M13.4 10.5 H20" stroke="#2e2e2e" stroke-width="1"/><circle cx="8.3" cy="17.4" r="1.5" fill="#2f86d2"/><path d="M13.4 17.4 H20" stroke="#2e2e2e" stroke-width="1"/></svg>
<span class="t" style="left:392.30px;top:279px;font-size:12.6px;line-height:12.6px;color:#424242;font-weight:bold;transform:scaleX(0.8979);"><u>I</u>con Sets</span>
<svg style="left:512.3px;top:275.7px;" width="8" height="12" viewBox="0 0 8 12"><path d="M1.3 1.7 L6.7 6 L1.3 10.3" fill="none" stroke="#444" stroke-width="1.3"/></svg>
<svg style="left:351.5px;top:316.5px;" width="17" height="14" viewBox="0 0 17 14"><rect x="0" y="0" width="15" height="13" fill="#fff"/><rect x="4" y="0" width="8" height="13" fill="#fdeacc"/><rect x="0" y="4" width="15" height="5" fill="#fdeacc"/><rect x="4" y="4" width="8" height="5" fill="#fbc56f" stroke="#e9a03a" stroke-width="1"/><path d="M4 0 V4 M4 9 V13 M12 0 V4 M12 9 V13 M0 4 H4 M12 4 H15 M0 9 H4 M12 9 H15" stroke="#4a4a4a" stroke-width="1" fill="none"/><rect x="0" y="0" width="15" height="13" fill="none" stroke="#3a3a3a" stroke-width="1"/></svg>
<span class="t" style="left:376.20px;top:318px;font-size:12.6px;line-height:12.6px;color:#424242;transform:scaleX(0.8906);"><u>N</u>ew Rule...</span>
<svg style="left:351.5px;top:344.5px;" width="17" height="14" viewBox="0 0 17 14"><rect x="0" y="0" width="15" height="13" fill="#fff"/><rect x="4" y="0" width="8" height="13" fill="#fdeacc"/><rect x="0" y="4" width="15" height="5" fill="#fdeacc"/><rect x="4" y="4" width="8" height="5" fill="#fbc56f" stroke="#e9a03a" stroke-width="1"/><path d="M4 0 V4 M4 9 V13 M12 0 V4 M12 9 V13 M0 4 H4 M12 4 H15 M0 9 H4 M12 9 H15" stroke="#4a4a4a" stroke-width="1" fill="none"/><rect x="0" y="0" width="15" height="13" fill="none" stroke="#3a3a3a" stroke-width="1"/><path d="M4.4 13.6 L15.6 3 V13.6 Z" fill="#fff"/><path d="M7.6 9.8 L13 4.8 L16 8 L10.6 13 Z" fill="#ecc9f5" stroke="#9a3fb5" stroke-width="1.15"/><path d="M9.5 8.1 L12.5 11.3" stroke="#9a3fb5" stroke-width="1"/></svg>
<span class="t" style="left:376.20px;top:346px;font-size:12.6px;line-height:12.6px;color:#424242;transform:scaleX(0.8720);"><u>C</u>lear Rules</span>
<svg style="left:512.3px;top:344.4px;" width="8" height="12" viewBox="0 0 8 12"><path d="M1.3 1.7 L6.7 6 L1.3 10.3" fill="none" stroke="#444" stroke-width="1.3"/></svg>
<svg style="left:350.5px;top:370.5px;" width="17" height="17" viewBox="0 0 17 17"><path d="M1 13 V1 H14" fill="none" stroke="#2e2e2e" stroke-width="1.1"/><g transform="translate(3,3)"><rect x="0" y="0" width="13" height="13" fill="#fff"/><rect x="4" y="0" width="5" height="13" fill="#fdeacc"/><rect x="0" y="4" width="13" height="5" fill="#fdeacc"/><rect x="4" y="4" width="5" height="5" fill="#fbc56f" stroke="#e9a03a" stroke-width="1"/><path d="M4 0 V4 M4 9 V13 M9 0 V4 M9 9 V13 M0 4 H4 M9 4 H13 M0 9 H4 M9 9 H13" stroke="#4a4a4a" stroke-width="1" fill="none"/><rect x="0" y="0" width="13" height="13" fill="none" stroke="#3a3a3a" stroke-width="1"/></g></svg>
<span class="t" style="left:376.20px;top:374px;font-size:12.6px;line-height:12.6px;color:#424242;transform:scaleX(0.8981);">Manage <u>R</u>ules...</span>
<svg style="left:545.4px;top:126.6px;" width="30" height="27" viewBox="0 0 30 27"><rect x="0.55" y="0.55" width="25.799999999999997" height="19.799999999999997" fill="#fff"/><path d="M6.9 0.5 V20.4 M20.2 0.5 V20.4 M0.5 7 H26.4 M0.5 14 H26.4 " stroke="#2e2e2e" stroke-width="0.95" fill="none"/><rect x="0.55" y="0.55" width="25.80" height="19.80" fill="none" stroke="#2e2e2e" stroke-width="1.1"/><rect x="6.9" y="0" width="13.3" height="20.9" fill="#fcd9a0"/><path d="M7.3 0 V20.9 M19.8 0 V20.9" stroke="#eda73f" stroke-width="1.1"/><path d="M6.4 0.55 H20.7 M6.4 20.35 H20.7" stroke="#2e2e2e" stroke-width="1.1" opacity="0.55"/><path d="M13.5 12 V1.6 M9 6 L13.5 1.5 L18 6" fill="none" stroke="#2e2e2e" stroke-width="1.2"/><rect x="12.15" y="13.25" width="16.8" height="11.9" fill="#fff" stroke="#2e2e2e" stroke-width="1.1"/><text x="20.6" y="23.1" font-size="10.6" text-anchor="middle" textLength="10.6" lengthAdjust="spacingAndGlyphs" fill="#444" font-family="Liberation Sans, sans-serif">10</text></svg>
<span class="t" style="left:582.30px;top:134px;font-size:12.6px;line-height:12.6px;color:#424242;font-weight:bold;transform:scaleX(0.9435);"><u>T</u>op 10 Items...</span>
<svg style="left:545.4px;top:174.6px;" width="30" height="27" viewBox="0 0 30 27"><rect x="0.55" y="0.55" width="25.799999999999997" height="19.799999999999997" fill="#fff"/><path d="M6.9 0.5 V20.4 M20.2 0.5 V20.4 M0.5 7 H26.4 M0.5 14 H26.4 " stroke="#2e2e2e" stroke-width="0.95" fill="none"/><rect x="0.55" y="0.55" width="25.80" height="19.80" fill="none" stroke="#2e2e2e" stroke-width="1.1"/><rect x="6.9" y="0" width="13.3" height="20.9" fill="#fcd9a0"/><path d="M7.3 0 V20.9 M19.8 0 V20.9" stroke="#eda73f" stroke-width="1.1"/><path d="M6.4 0.55 H20.7 M6.4 20.35 H20.7" stroke="#2e2e2e" stroke-width="1.1" opacity="0.55"/><path d="M13.5 12 V1.6 M9 6 L13.5 1.5 L18 6" fill="none" stroke="#2e2e2e" stroke-width="1.2"/><rect x="12.15" y="13.25" width="16.8" height="11.9" fill="#fff" stroke="#2e2e2e" stroke-width="1.1"/><text x="20.6" y="23.1" font-size="10.4" text-anchor="middle" textLength="10.4" lengthAdjust="spacingAndGlyphs" fill="#444" font-family="Liberation Sans, sans-serif">%</text></svg>
<span class="t" style="left:582.30px;top:182px;font-size:12.6px;line-height:12.6px;color:#424242;font-weight:bold;transform:scaleX(0.9187);">To<u>p</u> 10 %...</span>
<svg style="left:545.4px;top:222.6px;" width="30" height="27" viewBox="0 0 30 27"><rect x="0.55" y="0.55" width="25.799999999999997" height="19.799999999999997" fill="#fff"/><path d="M6.9 0.5 V20.4 M20.2 0.5 V20.4 M0.5 7 H26.4 M0.5 14 H26.4 " stroke="#2e2e2e" stroke-width="0.95" fill="none"/><rect x="0.55" y="0.55" width="25.80" height="19.80" fill="none" stroke="#2e2e2e" stroke-width="1.1"/><rect x="6.9" y="0" width="13.3" height="20.9" fill="#fcd9a0"/><path d="M7.3 0 V20.9 M19.8 0 V20.9" stroke="#eda73f" stroke-width="1.1"/><path d="M6.4 0.55 H20.7 M6.4 20.35 H20.7" stroke="#2e2e2e" stroke-width="1.1" opacity="0.55"/><path d="M13.5 1.4 V11.4 M9 7 L13.5 11.5 L18 7" fill="none" stroke="#2e2e2e" stroke-width="1.2"/><rect x="12.15" y="13.25" width="16.8" height="11.9" fill="#fff" stroke="#2e2e2e" stroke-width="1.1"/><text x="20.6" y="23.1" font-size="10.6" text-anchor="middle" textLength="10.6" lengthAdjust="spacingAndGlyphs" fill="#444" font-family="Liberation Sans, sans-serif">10</text></svg>
<span class="t" style="left:582.30px;top:230px;font-size:12.6px;line-height:12.6px;color:#424242;font-weight:bold;transform:scaleX(0.9519);"><u>B</u>ottom 10 Items...</span>
<svg style="left:545.4px;top:270.59999999999997px;" width="30" height="27" viewBox="0 0 30 27"><rect x="0.55" y="0.55" width="25.799999999999997" height="19.799999999999997" fill="#fff"/><path d="M6.9 0.5 V20.4 M20.2 0.5 V20.4 M0.5 7 H26.4 M0.5 14 H26.4 " stroke="#2e2e2e" stroke-width="0.95" fill="none"/><rect x="0.55" y="0.55" width="25.80" height="19.80" fill="none" stroke="#2e2e2e" stroke-width="1.1"/><rect x="6.9" y="0" width="13.3" height="20.9" fill="#fcd9a0"/><path d="M7.3 0 V20.9 M19.8 0 V20.9" stroke="#eda73f" stroke-width="1.1"/><path d="M6.4 0.55 H20.7 M6.4 20.35 H20.7" stroke="#2e2e2e" stroke-width="1.1" opacity="0.55"/><path d="M13.5 1.4 V11.4 M9 7 L13.5 11.5 L18 7" fill="none" stroke="#2e2e2e" stroke-width="1.2"/><rect x="12.15" y="13.25" width="16.8" height="11.9" fill="#fff" stroke="#2e2e2e" stroke-width="1.1"/><text x="20.6" y="23.1" font-size="10.4" text-anchor="middle" textLength="10.4" lengthAdjust="spacingAndGlyphs" fill="#444" font-family="Liberation Sans, sans-serif">%</text></svg>
<span class="t" style="left:582.30px;top:278px;font-size:12.6px;line-height:12.6px;color:#424242;font-weight:bold;transform:scaleX(0.9365);">B<u>o</u>ttom 10 %...</span>
<svg style="left:545.4px;top:318.59999999999997px;" width="30" height="27" viewBox="0 0 30 27"><rect x="0.55" y="0.55" width="25.799999999999997" height="19.799999999999997" fill="#fff"/><path d="M6.9 0.5 V20.4 M20.2 0.5 V20.4 M0.5 7 H26.4 M0.5 14 H26.4 " stroke="#2e2e2e" stroke-width="0.95" fill="none"/><rect x="0.55" y="0.55" width="25.80" height="19.80" fill="none" stroke="#2e2e2e" stroke-width="1.1"/><rect x="6.9" y="0" width="13.3" height="20.9" fill="#fcd9a0"/><path d="M7.3 0 V20.9 M19.8 0 V20.9" stroke="#eda73f" stroke-width="1.1"/><path d="M6.4 0.55 H20.7 M6.4 20.35 H20.7" stroke="#2e2e2e" stroke-width="1.1" opacity="0.55"/><path d="M13.5 12 V1.6 M9 6 L13.5 1.5 L18 6" fill="none" stroke="#2e2e2e" stroke-width="1.2"/><rect x="12.15" y="13.25" width="16.8" height="11.9" fill="#fff" stroke="#2e2e2e" stroke-width="1.1"/><text x="20.7" y="24" font-size="10.5" text-anchor="middle" fill="#444" font-style="italic" font-family="Liberation Serif, serif">x</text><path d="M18.9 16.2 H22.4" stroke="#444" stroke-width="0.9"/></svg>
<span class="t" style="left:582.30px;top:326px;font-size:12.6px;line-height:12.6px;color:#424242;font-weight:bold;transform:scaleX(0.9338);"><u>A</u>bove Average...</span>
<svg style="left:545.4px;top:366.59999999999997px;" width="30" height="27" viewBox="0 0 30 27"><rect x="0.55" y="0.55" width="25.799999999999997" height="19.799999999999997" fill="#fff"/><path d="M6.9 0.5 V20.4 M20.2 0.5 V20.4 M0.5 7 H26.4 M0.5 14 H26.4 " stroke="#2e2e2e" stroke-width="0.95" fill="none"/><rect x="0.55" y="0.55" width="25.80" height="19.80" fill="none" stroke="#2e2e2e" stroke-width="1.1"/><rect x="6.9" y="0" width="13.3" height="20.9" fill="#fcd9a0"/><path d="M7.3 0 V20.9 M19.8 0 V20.9" stroke="#eda73f" stroke-width="1.1"/><path d="M6.4 0.55 H20.7 M6.4 20.35 H20.7" stroke="#2e2e2e" stroke-width="1.1" opacity="0.55"/><path d="M13.5 1.4 V11.4 M9 7 L13.5 11.5 L18 7" fill="none" stroke="#2e2e2e" stroke-width="1.2"/><rect x="12.15" y="13.25" width="16.8" height="11.9" fill="#fff" stroke="#2e2e2e" stroke-width="1.1"/><text x="20.7" y="24" font-size="10.5" text-anchor="middle" fill="#444" font-style="italic" font-family="Liberation Serif, serif">x</text><path d="M18.9 16.2 H22.4" stroke="#444" stroke-width="0.9"/></svg>
<span class="t" style="left:582.30px;top:374px;font-size:12.6px;line-height:12.6px;color:#424242;font-weight:bold;transform:scaleX(0.9379);">Below A<u>v</u>erage...</span>
<span class="t" style="left:566.50px;top:413px;font-size:12.6px;line-height:12.6px;color:#424242;transform:scaleX(0.8902);"><u>M</u>ore Rules...</span>
<div style="left:0px;top:5px;width:2px;height:514px;background:linear-gradient(to right,#217346 0,#217346 1px,rgba(33,115,70,0.4) 1px,rgba(33,115,70,0.4) 2px)"></div>
<span class="t" style="left:650.60px;top:503px;font-size:12.6px;line-height:12.6px;color:#222;transform:scaleX(0.9854);">wsxdn.com</span>
</div></body></html>
